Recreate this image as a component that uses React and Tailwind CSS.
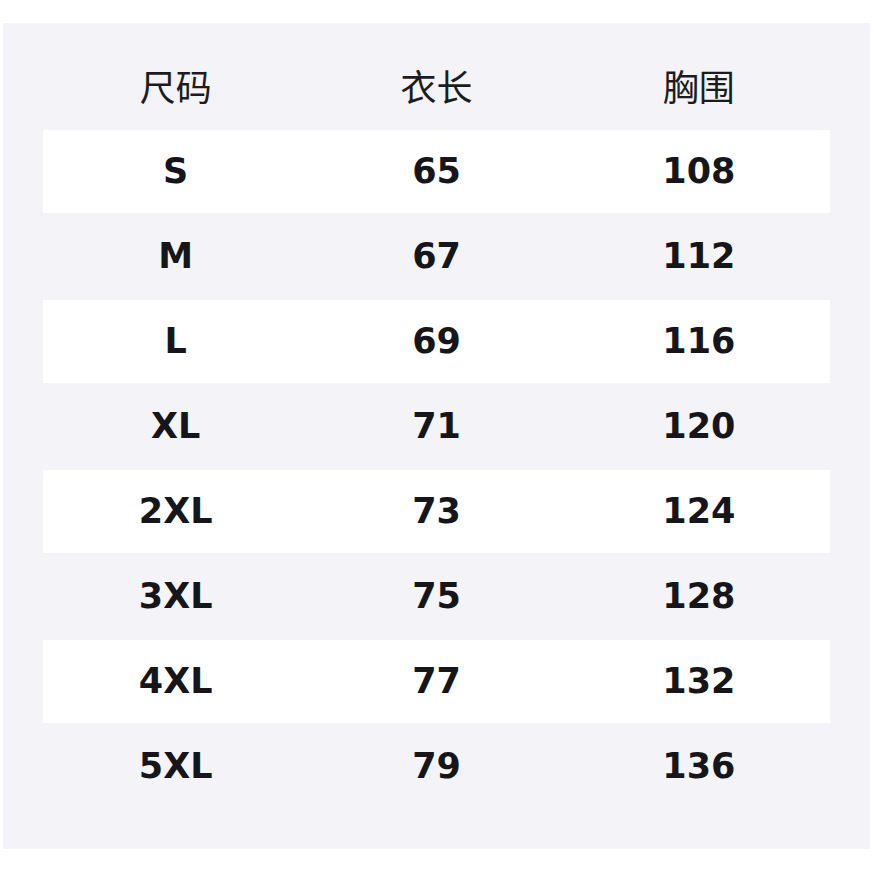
export default function App() {
  const rows = [
    ["S", "65", "108"],
    ["M", "67", "112"],
    ["L", "69", "116"],
    ["XL", "71", "120"],
    ["2XL", "73", "124"],
    ["3XL", "75", "128"],
    ["4XL", "77", "132"],
    ["5XL", "79", "136"],
  ];
  return (
    <div className="w-[874px] h-[874px] bg-white pt-[23px] pl-[3px]">
      <div className="w-[867px] h-[826px] bg-[#f3f3f8] px-[40px]">
        <div className="h-[107px] pt-[16px] grid grid-cols-3">
          {["尺码", "衣长", "胸围"].map((h, j) => (
            <div
              key={h}
              className={
                "flex items-center justify-center text-[36px] leading-none text-[#1c1c1e] " +
                (j === 0 ? "pl-[3px]" : "")
              }
              style={{ fontFamily: '"Noto Sans CJK SC", sans-serif' }}
            >
              {h}
            </div>
          ))}
        </div>
        {rows.map((r, i) => (
          <div
            key={i}
            className={
              "grid grid-cols-3 " + (i % 2 === 0 ? "bg-white h-[83px]" : "bg-transparent h-[87px]")
            }
          >
            {r.map((c, j) => (
              <div
                key={j}
                className={
                  "flex items-center justify-center text-[35px] font-bold leading-none text-[#16161a] font-['DejaVu_Sans',sans-serif] " +
                  (j === 0 ? "pl-[3px]" : "")
                }
              >
                {c}
              </div>
            ))}
          </div>
        ))}
      </div>
    </div>
  );
}
